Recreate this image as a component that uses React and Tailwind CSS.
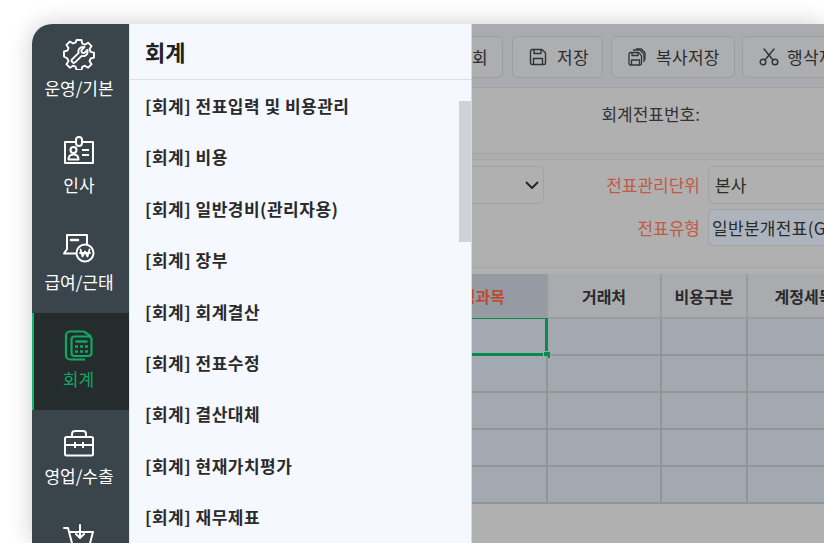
import React from "react";

const FONT = { fontFamily: '"Noto Sans CJK KR", "Noto Sans", sans-serif' };

function IconGear() {
    return (
        <svg viewBox="0 0 32 32" className="w-8 h-8" fill="none" stroke="currentColor" strokeWidth="1.900" strokeLinejoin="round" strokeLinecap="round">
            <path d="M13.500 2h5l.8 3.600 2.600 1.100 3.200-2 3.400 3.400-2 3.200 1.100 2.600 3.400.8v5l-3.400.8-1.100 2.600 2 3.200-3.400 3.400-3.200-2-2.600 1.100-.8 3.100h-5l-.8-3.100-2.600-1.100-3.200 2-3.400-3.400 2-3.200-1.100-2.600L1 18.500v-5l3.400-.8 1.100-2.600-2-3.200 3.400-3.400 3.200 2 2.600-1.100z" />
            <path d="M21.500 9.200l-3.200 3.200.6 2.200 2.200.6 3.200-3.200c.7 2.600-.2 4.600-2 5.600-1.200.6-2.500.7-3.600.2l-6.400 6.400a2 2 0 0 1-3-3l6.400-6.400c-.5-1.200-.4-2.600.3-3.700 1-1.800 3-2.600 5.500-1.900z" />
        </svg>
    );
}

function IconCard() {
    return (
        <svg viewBox="0 0 32 32" className="w-8 h-8" fill="none" stroke="currentColor" strokeWidth="2" strokeLinejoin="round">
            <path d="M13 7H2v21h28V7H19" />
            <rect x="13" y="2" width="6" height="9" rx="3" />
            <circle cx="10.500" cy="15" r="3" />
            <path d="M5.500 24.500c0-3.500 2-5 5-5s5 1.500 5 5z" />
            <path d="M19 15h7M19 20h7" />
        </svg>
    );
}

function IconPay() {
    return (
        <svg viewBox="0 0 32 32" className="w-8 h-8" fill="none" stroke="currentColor" strokeWidth="2" strokeLinejoin="round" strokeLinecap="round">
            <path d="M4 17V3h20v9" />
            <path d="M4 17l-3 4.500h12" />
            <path d="M8 8h7" strokeWidth="2.500" />
            <circle cx="22" cy="21" r="8.500" />
            <path d="M17.500 17.500l2 7 2.500-5 2.500 5 2-7M17 21h10" strokeWidth="1.800" />
        </svg>
    );
}

function IconAccount() {
    return (
        <svg viewBox="0 0 32 32" className="w-8 h-8" fill="none" stroke="currentColor" strokeWidth="2.200" strokeLinejoin="round">
            <path d="M21 2.500H7a4 4 0 0 0-4 4v20a4 4 0 0 0 4 4h15" />
            <path d="M21 2.500l7 5" />
            <rect x="8.500" y="7.500" width="20" height="19.500" rx="3" />
            <path d="M12.500 12.500h12" strokeWidth="2.500" />
            <path d="M12 17.500h3M17 17.500h3M22 17.500h3M12 22.500h3M17 22.500h3M22 22.500h3" strokeWidth="2.600" />
        </svg>
    );
}

function IconBox() {
    return (
        <svg viewBox="0 0 32 32" className="w-8 h-8" fill="none" stroke="currentColor" strokeWidth="2" strokeLinejoin="round">
            <rect x="2" y="11" width="28" height="18.500" rx="1.500" />
            <path d="M9 11V8a3 3 0 0 1 3-3h8a3 3 0 0 1 3 3v3" />
            <path d="M2 19h28" />
            <path d="M12 16v6M20 16v6" />
        </svg>
    );
}

function IconCart() {
    return (
        <svg viewBox="0 0 32 32" className="w-8 h-8" fill="none" stroke="currentColor" strokeWidth="2" strokeLinejoin="round" strokeLinecap="round">
            <path d="M1 5h4l5 19h16l4-15H7" />
            <path d="M17 2v13M13 11l4 4 4-4" />
        </svg>
    );
}

function IconSave() {
    return (
        <svg viewBox="0 0 18 18" className="w-[18px] h-[18px] shrink-0" fill="none" stroke="#333" strokeWidth="1.400" strokeLinejoin="round">
            <path d="M1.500 3a1.500 1.500 0 0 1 1.500-1.500h10l3.500 3.500v10a1.500 1.500 0 0 1-1.500 1.500H3a1.500 1.500 0 0 1-1.500-1.500z" />
            <path d="M5 1.500v4h7v-4" />
            <path d="M4.500 16.500v-6h9v6" />
        </svg>
    );
}

function IconSaveCopy() {
    return (
        <svg viewBox="0 0 18 18" className="w-[18px] h-[18px] shrink-0" fill="none" stroke="#333" strokeWidth="1.300" strokeLinejoin="round">
            <path d="M1 6a1.500 1.500 0 0 1 1.500-1.500h8l3 3v8a1.500 1.500 0 0 1-1.500 1.500H2.500A1.500 1.500 0 0 1 1 15.500z" />
            <path d="M4 4.500v3h6v-3" />
            <path d="M3.500 17v-5h8v5" />
            <path d="M5 2h7l4 4v8" />
            <path d="M8 .8h5l4 4v7" />
        </svg>
    );
}

function IconCut() {
    return (
        <svg viewBox="0 0 20 18" className="w-5 h-[18px] shrink-0" fill="none" stroke="#333" strokeWidth="1.400" strokeLinecap="round">
            <circle cx="4" cy="14" r="2.800" />
            <circle cx="16" cy="14" r="2.800" />
            <path d="M6 12L15 1M14 12L5 1" />
        </svg>
    );
}

const sideItems = [
    { label: "운영/기본", Icon: IconGear },
    { label: "인사", Icon: IconCard },
    { label: "급여/근태", Icon: IconPay },
    { label: "회계", Icon: IconAccount, active: true },
    { label: "영업/수출", Icon: IconBox },
    { label: "", Icon: IconCart },
];

const menuItems = [
    "[회계] 전표입력 및 비용관리",
    "[회계] 비용",
    "[회계] 일반경비(관리자용)",
    "[회계] 장부",
    "[회계] 회계결산",
    "[회계] 전표수정",
    "[회계] 결산대체",
    "[회계] 현재가치평가",
    "[회계] 재무제표",
];

const btnCls =
    "h-[42px] shrink-0 flex items-center rounded-md border border-[#9c9ea1] bg-[#acaeb0] text-[17px] text-[#2c2c2c] tracking-[0.3px]";

function Sidebar() {
    return (
        <aside className="w-[97px] shrink-0 bg-[#3a444b] overflow-hidden rounded-tl-[20px]">
            <div className="-mt-0.5 flex flex-col">
                {sideItems.map(({ label, Icon, active }) => (
                    <div
                        key={label}
                        className={
                            active
                                ? "h-[97px] shrink-0 flex flex-col items-center pt-4 bg-[#252c2e] text-[#12a862] border-l-2 border-[#0fb56a] pr-1.5"
                                : "h-[97px] shrink-0 flex flex-col items-center pt-4 text-white pr-[3px]"
                        }
                    >
                        <Icon />
                        {label && <span className="mt-1.5 text-[17px] leading-6 whitespace-nowrap">{label}</span>}
                    </div>
                ))}
            </div>
        </aside>
    );
}

function MenuPanel() {
    return (
        <div className="relative w-[343px] shrink-0 bg-[#f5f8fe] border-l border-l-[#e3e6ea] border-r border-r-[#d4d7dc] overflow-hidden">
            <div className="h-14 flex items-center pl-[15px] border-b border-[#dcdfe4] text-[22px] font-bold text-[#222]">
                회계
            </div>
            <ul>
                {menuItems.map((m) => (
                    <li key={m} className="h-[51.4px] flex items-center pl-[15px] text-[17px] font-semibold tracking-[0.5px] text-[#2a2a2a] whitespace-nowrap">
                        {m}
                    </li>
                ))}
            </ul>
            <div className="absolute right-0 top-[77px] w-[12px] h-[141px] bg-[#cfd3d8]" />
        </div>
    );
}

function Toolbar() {
    return (
        <div className="h-16 shrink-0 bg-[#a9abae] border-b border-[#a0a2a4] flex items-center gap-2 pt-[2px] overflow-hidden whitespace-nowrap">
            <div className={btnCls + " w-[60px] -ml-[29px] justify-end pr-3.5"}>조회</div>
            <div className={btnCls + " w-[91px] ml-px gap-2.5 pl-4"}>
                <IconSave />
                저장
            </div>
            <div className={btnCls + " w-[124px] gap-2.5 pl-4"}>
                <IconSaveCopy />
                복사저장
            </div>
            <div className={btnCls + " w-[140px] -ml-px gap-2 pl-4"}>
                <IconCut />
                행삭제
            </div>
        </div>
    );
}

function Form() {
    return (
        <>
            <div className="h-[65px] shrink-0 flex items-center justify-end pb-[14px] pr-[124px] text-[17px] text-[#333]">
                회계전표번호:
            </div>
            <div className="h-[7px] shrink-0 border-y border-[#a6a6a6] bg-[#adadad]" />
            <div className="h-[107px] shrink-0 pt-1.5 flex flex-col gap-[5px] text-[17px]">
                <div className="flex h-[38px]">
                    <div className="w-[72px] border border-l-0 border-[#a3a3a3] rounded-r-md flex items-center justify-end pr-[3px]">
                        <svg viewBox="0 0 16 16" className="w-4 h-4" fill="none" stroke="#222" strokeWidth="1.800" strokeLinecap="round" strokeLinejoin="round">
                            <path d="M2.500 5.500L8 11l5.500-5.500" />
                        </svg>
                    </div>
                    <div className="w-[156px] flex items-center justify-end text-[#bf5a45]">전표관리단위</div>
                    <div className="ml-2 flex-1 border border-r-0 border-[#a3a3a3] rounded-l-md flex items-center pl-1.5 text-[#2a2a2a]">본사</div>
                </div>
                <div className="flex h-[37px]">
                    <div className="w-[228px] flex items-center justify-end text-[#bf5a45]">전표유형</div>
                    <div className="ml-2 flex-1 min-w-0 border border-r-0 border-[#a3a3a3] bg-[#adb4be] rounded-l-md flex items-center pl-[3px] text-[#2a2a2a] tracking-[0.3px] whitespace-nowrap overflow-hidden">
                        일반분개전표(G
                    </div>
                </div>
            </div>
            <div className="h-[7px] shrink-0 border-t border-[#a6a6a6]" />
        </>
    );
}

function Table() {
    const cols = "grid grid-cols-[76px_114px_86px_114px]";
    const headCls = "flex items-center justify-center border-r-2 border-[#9b9c9e] text-[16px] font-bold text-[#2a2a2a] whitespace-nowrap overflow-hidden";
    const cellCls = "border-r-2 border-b-2 border-[#8f9599] bg-[#a2a9b0]";
    return (
        <div className="shrink-0 w-[390px]">
            <div className={cols + " h-[45px] bg-[#a9abae] border-b-2 border-[#9b9c9e]"}>
                <div className={headCls + " bg-[#969ba3] text-[#bb4c32] justify-end pr-[41px]"}>
                    <span className="shrink-0">계정과목</span>
                </div>
                <div className={headCls}>거래처</div>
                <div className={headCls}>비용구분</div>
                <div className={headCls + " border-r-0"}>계정세목</div>
            </div>
            {[0, 1, 2, 3, 4].map((r) => (
                <div key={r} className={cols + " h-[37px]"}>
                    <div className={cellCls + " relative"}>
                        {r === 0 && (
                            <div className="absolute -top-px left-0 right-[-2px] bottom-[-2px] border-r-[3px] border-b-[3px] border-t border-[#0b8a50]">
                                <div className="absolute right-[-5px] bottom-[-5px] w-[6px] h-[6px] bg-[#0b8a50] outline outline-[#a2a9b0]" />
                            </div>
                        )}
                    </div>
                    <div className={cellCls} />
                    <div className={cellCls} />
                    <div className={cellCls + " border-r-0"} />
                </div>
            ))}
        </div>
    );
}

export default function App() {
    return (
        <div className="w-[824px] h-[543px] overflow-hidden bg-white pl-8 pt-6" style={FONT}>
            <div className="flex h-[519px] w-[792px] rounded-tl-[20px] shadow-[0_0_24px_rgba(0,0,0,0.2)]">
                <Sidebar />
                <MenuPanel />
                <main className="flex-1 min-w-0 overflow-hidden bg-[#b0b0b0] flex flex-col">
                    <Toolbar />
                    <Form />
                    <Table />
                </main>
            </div>
        </div>
    );
}
